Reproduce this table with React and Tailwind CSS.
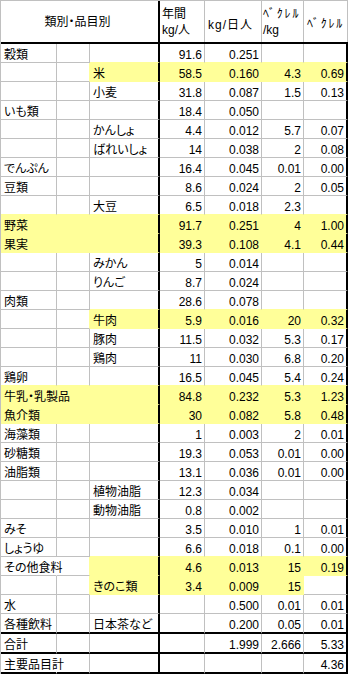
const rows = [
  { a: "穀類", d: "91.6", e: "0.251" },
  { c: "米", d: "58.5", e: "0.160", f: "4.3", g: "0.69", hl: "cg" },
  { c: "小麦", d: "31.8", e: "0.087", f: "1.5", g: "0.13" },
  { a: "いも類", d: "18.4", e: "0.050" },
  { c: "かんしょ", d: "4.4", e: "0.012", f: "5.7", g: "0.07" },
  { c: "ばれいしょ", d: "14", e: "0.038", f: "2", g: "0.08" },
  { a: "でんぷん", d: "16.4", e: "0.045", f: "0.01", g: "0.00" },
  { a: "豆類", d: "8.6", e: "0.024", f: "2", g: "0.05" },
  { c: "大豆", d: "6.5", e: "0.018", f: "2.3" },
  { a: "野菜", d: "91.7", e: "0.251", f: "4", g: "1.00", hl: "full" },
  { a: "果実", d: "39.3", e: "0.108", f: "4.1", g: "0.44", hl: "full" },
  { c: "みかん", d: "5", e: "0.014" },
  { c: "りんご", d: "8.7", e: "0.024" },
  { a: "肉類", d: "28.6", e: "0.078" },
  { c: "牛肉", d: "5.9", e: "0.016", f: "20", g: "0.32", hl: "cg" },
  { c: "豚肉", d: "11.5", e: "0.032", f: "5.3", g: "0.17" },
  { c: "鶏肉", d: "11", e: "0.030", f: "6.8", g: "0.20" },
  { a: "鶏卵", d: "16.5", e: "0.045", f: "5.4", g: "0.24" },
  { a: "牛乳・乳製品", d: "84.8", e: "0.232", f: "5.3", g: "1.23", hl: "full", over: true },
  { a: "魚介類", d: "30", e: "0.082", f: "5.8", g: "0.48", hl: "full" },
  { a: "海藻類", d: "1", e: "0.003", f: "2", g: "0.01" },
  { a: "砂糖類", d: "19.3", e: "0.053", f: "0.01", g: "0.00" },
  { a: "油脂類", d: "13.1", e: "0.036", f: "0.01", g: "0.00" },
  { c: "植物油脂", d: "12.3", e: "0.034" },
  { c: "動物油脂", d: "0.8", e: "0.002" },
  { a: "みそ", d: "3.5", e: "0.010", f: "1", g: "0.01" },
  { a: "しょうゆ", d: "6.6", e: "0.018", f: "0.1", g: "0.00" },
  { a: "その他食料", d: "4.6", e: "0.013", f: "15", g: "0.19", hl: "cg", over: true },
  { c: "きのこ類", d: "3.4", e: "0.009", f: "15", hl: "cf" },
  { a: "水", e: "0.500", f: "0.01", g: "0.01" },
  { a: "各種飲料", c: "日本茶など", e: "0.200", f: "0.05", g: "0.01" },
  { a: "合計", e: "1.999", f: "2.666", g: "5.33" },
  { a: "主要品目計", g: "4.36", over: true },
];

const WIDTHS = ["w-[56px]", "w-[33px]", "w-[70px]", "w-[45px]", "w-[57px]", "w-[42px]", "w-[44px]"];
const THICK = [false, false, true, false, false, false, true];
const KEYS = ["a", "b", "c", "d", "e", "f", "g"];

function yellowCols(hl) {
  if (hl === "full") return [1, 1, 1, 1, 1, 1, 1];
  if (hl === "cg") return [0, 0, 1, 1, 1, 1, 1];
  if (hl === "cf") return [0, 0, 1, 1, 1, 1, 0];
  return [0, 0, 0, 0, 0, 0, 0];
}

function Row({ row, idx }) {
  const ys = yellowCols(row.hl);
  const next = rows[idx + 1] ? yellowCols(rows[idx + 1].hl) : [0, 0, 0, 0, 0, 0, 0];
  const last = idx >= 30;
  return (
    <div className={`flex ${last ? "h-[20px]" : "h-[19px]"} ${row.hl === "full" ? "bg-[#ffff99]" : ""}`}>
      {KEYS.map((k, i) => {
        const yl = ys[i];
        let right;
        if (THICK[i]) right = "border-r-2 border-r-black";
        else if (yl || ys[i + 1]) right = "border-r border-r-[#ffff99]";
        else if (i === 0 && row.over) right = "border-r border-r-transparent";
        else right = "border-r border-r-[#c0c0c0]";
        let bottom;
        if (last) bottom = "border-b-2 border-b-black";
        else if (yl || next[i]) bottom = "border-b border-b-[#ffff99]";
        else bottom = "border-b border-b-[#c0c0c0]";
        const bg = yl && row.hl !== "full" ? "bg-[#ffff99]" : "";
        const align = i >= 3 ? "justify-end pr-[2px]" : "pl-[3px]";
        return (
          <div
            key={k}
            className={`${WIDTHS[i]} shrink-0 flex items-end leading-[14px] whitespace-nowrap ${right} ${bottom} ${bg} ${align}`}
          >
            {row[k]}
          </div>
        );
      })}
    </div>
  );
}

export default function App() {
  return (
    <div className="w-[349px] h-[674px] bg-white text-black text-[12px] font-['Liberation_Sans','Noto_Sans_CJK_JP',sans-serif] [font-feature-settings:'palt'] overflow-hidden">
      <div className="w-[348px] border-l border-t border-l-[#c0c0c0] border-t-[#c0c0c0]">
        {/* header */}
        <div className="flex h-[43px] border-b-2 border-b-black">
          <div className="w-[159px] shrink-0 flex items-center justify-center pr-[4px] border-r-2 border-r-black">
            類別・品目別
          </div>
          <div className="w-[45px] shrink-0 flex flex-col justify-center pl-[2px] leading-[16px] border-r border-r-[#c0c0c0]">
            <span>年間</span>
            <span>kg/人</span>
          </div>
          <div className="w-[57px] shrink-0 flex items-center pl-[3px] pt-[6px] tracking-[1px] border-r border-r-[#c0c0c0]">
            kg/日人
          </div>
          <div className="w-[42px] shrink-0 flex flex-col justify-center pl-[1px] leading-[16px] border-r border-r-[#c0c0c0]">
            <span className="tracking-[1.8px]">ﾍﾞｸﾚﾙ</span>
            <span>/kg</span>
          </div>
          <div className="w-[44px] shrink-0 flex items-center justify-center pt-[5px] border-r border-r-[#c0c0c0]">
            <span className="tracking-[1.8px]">ﾍﾞｸﾚﾙ</span>
          </div>
        </div>
        {rows.map((row, idx) => (
          <Row key={idx} row={row} idx={idx} />
        ))}
      </div>
    </div>
  );
}
